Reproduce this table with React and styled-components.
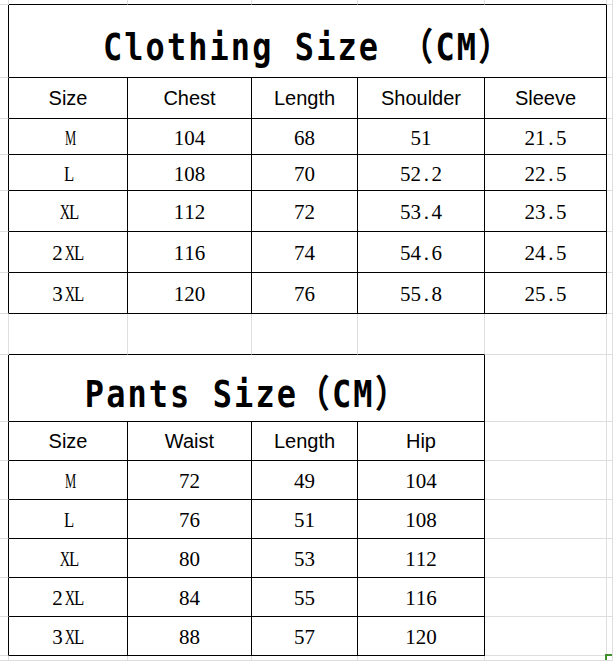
import React from 'react';
import styled, { createGlobalStyle } from 'styled-components';

const GlobalStyle = createGlobalStyle`
  html, body {
    margin: 0;
    padding: 0;
    background: #ffffff;
  }
`;

const LIGHT = '#dedede';
const DARK = '#000000';

const Sheet = styled.div`
  width: 613px;
  height: 661px;
  overflow: hidden;
  display: grid;
  grid-template-columns: 9px 119px 124px 106px 127px 122px 1fr;
  grid-template-rows: 5px 73px 41px 36px 36px 41px 41px 41px 41px 67px 39px 39px 39px 39px 39px 39px 1fr;
  background: #ffffff;
`;

const Cell = styled.div`
  box-sizing: border-box;
  grid-column: span ${p => p.$span || 1};
  border-right: 1px solid ${p => p.$right};
  border-bottom: 1px solid ${p => p.$bottom};
  display: flex;
  align-items: center;
  justify-content: center;
  color: #000;
  white-space: nowrap;
  min-width: 0;
`;

const Title = styled.span`
  font-family: 'DejaVu Sans Mono', 'Noto Sans CJK SC', monospace;
  font-weight: 700;
  font-size: 38px;
  letter-spacing: 2.5px;
  padding-top: 4px;
  transform: scaleX(0.84);
`;

const Head = styled.span`
  font-family: 'Liberation Sans', Arial, sans-serif;
  font-size: 20px;
  padding-top: 1px;
`;

const Value = styled.span`
  font-family: 'Liberation Serif', 'Times New Roman', serif;
  font-size: 21px;
  padding-top: 3px;
  display: inline-flex;
`;

const Glyph = styled.span`
  display: inline-block;
  width: 0.5em;
  text-align: center;
  transform: scaleX(${p => p.$scale});
`;

const Corner = styled.div`
  width: 100%;
  height: 100%;
  margin: -2px 0 0 -2px;
  border-top: 2px solid #3f8f2c;
  border-left: 2px solid #3f8f2c;
`;

// letters are squeezed into half-width cells, like a Song face
const letterScale = { M: 0.6, X: 0.68, L: 0.8 };

const clothing = {
  title: 'Clothing Size （CM）',
  head: ['Size', 'Chest', 'Length', 'Shoulder', 'Sleeve'],
  rows: [
    ['M', '104', '68', '51', '21.5'],
    ['L', '108', '70', '52.2', '22.5'],
    ['XL', '112', '72', '53.4', '23.5'],
    ['2XL', '116', '74', '54.6', '24.5'],
    ['3XL', '120', '76', '55.8', '25.5'],
  ],
};

const pants = {
  title: 'Pants Size（CM）',
  head: ['Size', 'Waist', 'Length', 'Hip'],
  rows: [
    ['M', '72', '49', '104'],
    ['L', '76', '51', '108'],
    ['XL', '80', '53', '112'],
    ['2XL', '84', '55', '116'],
    ['3XL', '88', '57', '120'],
  ],
};

const ROWS = 17;
const COLS = 7;

// tables placed on the sheet: [first row, first col, data]
const tables = [
  { row: 1, col: 1, data: clothing },
  { row: 9, col: 1, data: pants },
];

function inTable(r, c) {
  return tables.some(t => {
    const w = t.data.head.length;
    const h = t.data.rows.length + 2;
    return r >= t.row && r < t.row + h && c >= t.col && c < t.col + w;
  });
}

function cellAt(r, c) {
  for (const t of tables) {
    const { data } = t;
    const w = data.head.length;
    const i = r - t.row;
    const j = c - t.col;
    if (j < 0 || j >= w) continue;
    if (i === 0) return j === 0 ? { kind: 'title', text: data.title, span: w } : { skip: true };
    if (i === 1) return { kind: 'head', text: data.head[j] };
    if (i > 1 && i < data.rows.length + 2) return { kind: 'value', text: data.rows[i - 2][j] };
  }
  return { kind: 'empty' };
}

function SongText({ text }) {
  return (
    <Value>
      {text.split('').map((ch, i) => (
        <Glyph key={i} $scale={letterScale[ch] || 1}>
          {ch}
        </Glyph>
      ))}
    </Value>
  );
}

export default function App() {
  const cells = [];
  for (let r = 0; r < ROWS; r++) {
    for (let c = 0; c < COLS; c++) {
      const cell = cellAt(r, c);
      if (cell.skip) continue;
      const span = cell.span || 1;
      const last = c + span - 1;
      const right = inTable(r, last) || inTable(r, last + 1) ? DARK : LIGHT;
      const bottom = inTable(r, c) || inTable(r + 1, c) ? DARK : LIGHT;
      let content = null;
      if (cell.kind === 'title') content = <Title>{cell.text}</Title>;
      if (cell.kind === 'head') content = <Head>{cell.text}</Head>;
      if (cell.kind === 'value') content = <SongText text={cell.text} />;
      if (r === ROWS - 1 && c === COLS - 1) content = <Corner />;
      cells.push(
        <Cell key={`${r}-${c}`} $span={span} $right={right} $bottom={bottom}>
          {content}
        </Cell>
      );
    }
  }

  return (
    <>
      <GlobalStyle />
      <Sheet>{cells}</Sheet>
    </>
  );
}
